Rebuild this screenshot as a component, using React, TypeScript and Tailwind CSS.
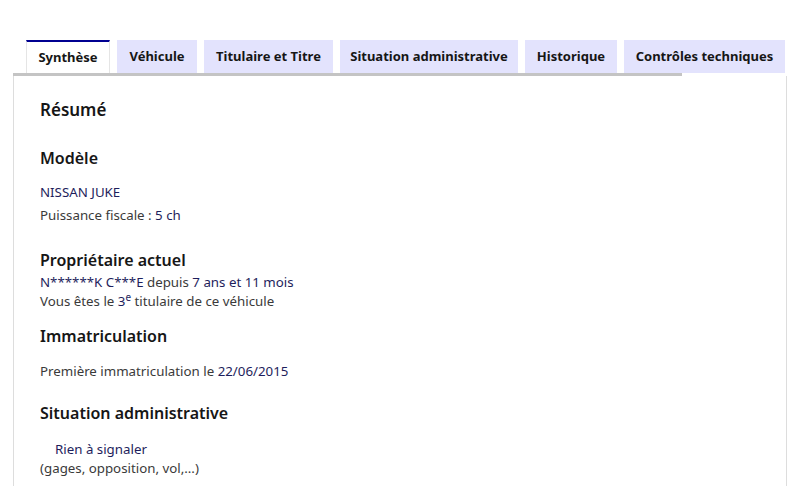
const tabs = [
  { label: 'Synthèse', w: 'w-[84px]' },
  { label: 'Véhicule', w: 'w-[80px]' },
  { label: 'Titulaire et Titre', w: 'w-[129px]' },
  { label: 'Situation administrative', w: 'w-[178px]' },
  { label: 'Historique', w: 'w-[92px]' },
  { label: 'Contrôles techniques', w: 'w-[161px]' },
];

const App = () => {
  return (
    <div className="h-[488px] bg-white pt-[40px] pl-[13px] font-['Noto_Sans',sans-serif] overflow-hidden">
      <div className="w-[774px]">
        {/* Tabs */}
        <ul className="flex gap-[7px] pl-[13px] h-[33px]">
          {tabs.map((t, i) => (
            <li
              key={t.label}
              className={`${t.w} flex items-center justify-center text-[13px] font-bold text-[#161616] ${
                i === 0 ? 'bg-white border-t-2 border-[#000091] border-x border-x-[#e5e5e5]' : 'bg-[#e3e3fd]'
              }`}
            >
              {t.label}
            </li>
          ))}
        </ul>
        <div className="flex">
          <div className="w-[669px] h-[3px] bg-[#c4c4c4]" />
        </div>

        {/* Panel */}
        <div className="border-x border-[#dddddd] pl-[26px] pt-[22px] pb-[8px]">
          <h2 className="text-[17px] font-semibold text-[#161616] leading-[24px]">Résumé</h2>

          <h3 className="mt-[24px] text-[16px] font-semibold text-[#161616] leading-[24px]">Modèle</h3>
          <p className="mt-[11px] text-[13.3px] text-[#1e1e5c] leading-[23px]">NISSAN JUKE</p>
          <p className="text-[13.3px] text-[#3a3a3a] leading-[23px]">
            Puissance fiscale : <span className="text-[#1e1e5c]">5 ch</span>
          </p>

          <h3 className="mt-[21px] text-[16px] font-semibold text-[#161616] leading-[24px]">Propriétaire actuel</h3>
          <p className="text-[13.3px] text-[#3a3a3a] leading-[20px]">
            <span className="text-[#1e1e5c]">N******K C***E</span> depuis <span className="text-[#1e1e5c]">7 ans et 11 mois</span>
          </p>
          <p className="text-[13.3px] text-[#3a3a3a] leading-[19px]">
            Vous êtes le <span className="text-[#1e1e5c]">3<sup className="text-[10px]">e</sup></span> titulaire de ce véhicule
          </p>

          <h3 className="mt-[13px] text-[16px] font-semibold text-[#161616] leading-[24px]">Immatriculation</h3>
          <p className="mt-[12px] text-[13.3px] text-[#3a3a3a] leading-[23px]">
            Première immatriculation le <span className="text-[#1e1e5c]">22/06/2015</span>
          </p>

          <h3 className="mt-[18px] text-[16px] font-semibold text-[#161616] leading-[24px]">Situation administrative</h3>
          <p className="mt-[15px] pl-[15px] text-[13.3px] text-[#1e1e5c] leading-[19px]">Rien à signaler</p>
          <p className="text-[13.3px] text-[#3a3a3a] leading-[19px]">(gages, opposition, vol,...)</p>
        </div>
      </div>
    </div>
  );
};

export default App;
